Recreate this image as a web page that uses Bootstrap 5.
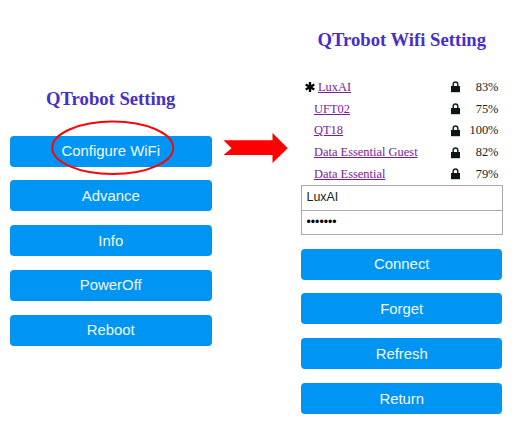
<!DOCTYPE html>
<html lang="en">
<head>
<meta charset="utf-8">
<meta name="viewport" content="width=device-width, initial-scale=1">
<title>QTrobot Setting</title>
<link href="https://cdn.jsdelivr.net/npm/bootstrap@5.3.0/dist/css/bootstrap.min.css" rel="stylesheet">
<style>
body{background:#fff;color:#222;font-family:"Liberation Serif",serif;height:430px;overflow:hidden}
.screen{width:201.5px}
.setting-screen{margin-left:10px;padding-top:87px}
.wifi-screen{margin-left:12.7px;padding-top:27.6px}
.screen-title{font-size:18.67px;line-height:24px;font-weight:700;color:#4730c4;white-space:nowrap}
.menu{gap:13.8px}
.menu .btn{height:31px;border:0;padding:0;border-radius:4px;background:#0095f3;color:#f0f8ff;font:14.9px/30px "Liberation Sans",sans-serif}
.setting-screen .menu{margin-top:24.6px}
.wifi-screen .menu{margin-top:13.6px}
.ring{left:41px;top:-16px;width:123px;height:55px}
.arrow{margin:132px 0 0 11.8px;width:65px;height:32px}
.networks{margin-top:25px;font-size:12.45px}
.network{height:21.7px;line-height:21px;padding-right:4px}
.network a{color:#7a1a9c}
.star{width:10px;height:10px;margin:0 3px 0 4px}
.indent{margin-left:13px}
.lock{width:9px;height:12px}
.signal{width:38.5px}
.entry{width:202.5px;height:25.5px;border:1px solid #aaa;border-radius:0;padding:0 4.5px 2px;font:12.4px/21px "Liberation Sans",sans-serif;color:#222;background:#fff}
.entry + .entry{margin-top:-1px}
.dots{font-size:12.3px;color:#000;padding-bottom:1px}
</style>
</head>
<body>
<svg class="d-none"><symbol id="lock" viewBox="0 0 9 12"><path d="M2.200 5.500V3.300a2.300 2.300 0 0 1 4.600 0V5.500" fill="none" stroke="#1a2421" stroke-width="1.5"/><path d="M0 5h9v6.200H0z" fill="#0b1512"/></symbol></svg>
<main class="d-flex align-items-start">
  <section class="screen setting-screen flex-shrink-0">
    <h1 class="screen-title text-center mb-0">QTrobot Setting</h1>
    <div class="menu d-flex flex-column position-relative">
      <button class="btn">Configure WiFi</button>
      <button class="btn">Advance</button>
      <button class="btn">Info</button>
      <button class="btn">PowerOff</button>
      <button class="btn">Reboot</button>
      <svg class="ring position-absolute pe-none" viewBox="0 0 123 55"><ellipse cx="61.8" cy="27.8" rx="60.5" ry="26.2" fill="none" stroke="#fb0509" stroke-width="2"/></svg>
    </div>
  </section>
  <svg class="arrow flex-shrink-0" viewBox="0 0 65 32"><path d="M.5 8.2h49V1L64.8 16.300 49.500 31V23H.5l8-6.800z" fill="#f00"/></svg>
  <section class="screen wifi-screen flex-shrink-0">
    <h1 class="screen-title text-center mb-0">QTrobot Wifi Setting</h1>
    <div class="networks">
      <div class="network d-flex align-items-center"><svg class="star" viewBox="0 0 10 10"><path d="M5 0v10M.7 2.500l8.600 5M.7 7.500l8.600-5" stroke="#000" stroke-width="2.3"/></svg><a href="#">LuxAI</a><svg class="lock ms-auto"><use href="#lock"/></svg><span class="signal text-end">83%</span></div>
      <div class="network d-flex align-items-center"><a class="indent" href="#">UFT02</a><svg class="lock ms-auto"><use href="#lock"/></svg><span class="signal text-end">75%</span></div>
      <div class="network d-flex align-items-center"><a class="indent" href="#">QT18</a><svg class="lock ms-auto"><use href="#lock"/></svg><span class="signal text-end">100%</span></div>
      <div class="network d-flex align-items-center"><a class="indent" href="#">Data Essential Guest</a><svg class="lock ms-auto"><use href="#lock"/></svg><span class="signal text-end">82%</span></div>
      <div class="network d-flex align-items-center"><a class="indent" href="#">Data Essential</a><svg class="lock ms-auto"><use href="#lock"/></svg><span class="signal text-end">79%</span></div>
    </div>
    <input class="entry d-block" type="text" value="LuxAI" aria-label="Network">
    <input class="entry dots d-block" type="text" value="•••••••" aria-label="Password">
    <div class="menu d-flex flex-column">
      <button class="btn">Connect</button>
      <button class="btn">Forget</button>
      <button class="btn">Refresh</button>
      <button class="btn">Return</button>
    </div>
  </section>
</main>
<script src="https://cdn.jsdelivr.net/npm/bootstrap@5.3.0/dist/js/bootstrap.bundle.min.js"></script>
</body>
</html>
